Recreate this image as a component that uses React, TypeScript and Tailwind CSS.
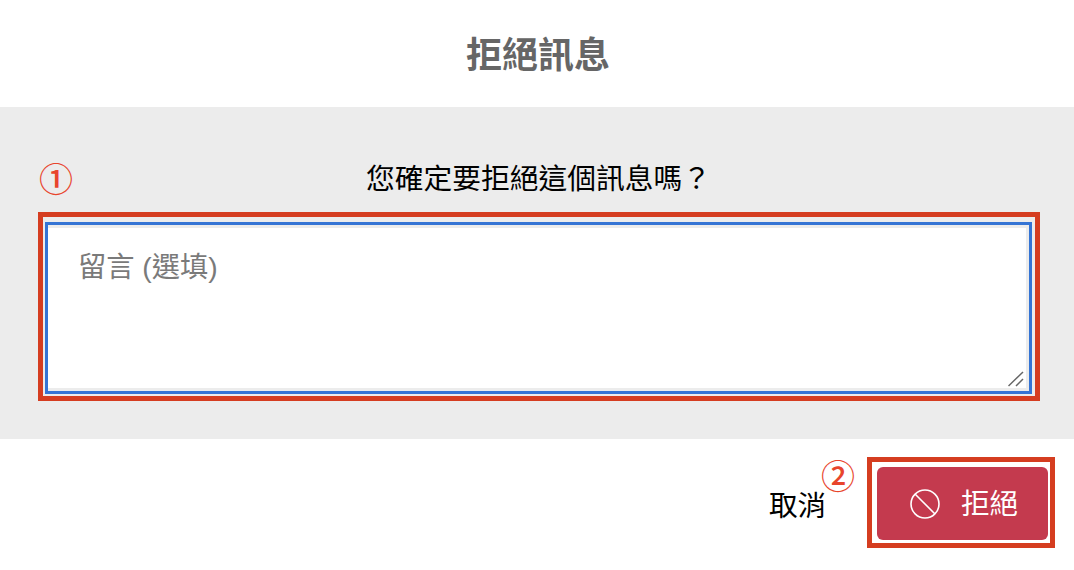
import { useState } from "react";

const cjk = "font-['Liberation_Sans','Noto_Sans_CJK_TC',sans-serif]";

const App = () => {
  const [note, setNote] = useState("");

  return (
    <div className={`${cjk} relative flex h-[570px] w-[1074px] flex-col overflow-hidden bg-white`}>
      {/* Title */}
      <header className="flex h-[107px] items-center justify-center pt-[4px] pl-[2px]">
        <h1 className="text-[36px] leading-none font-bold text-[#666666]">拒絕訊息</h1>
      </header>

      {/* Body */}
      <section className="relative h-[332px] bg-[#ececec] pt-[55px] pr-[34px] pl-[38px]">
        <span className="absolute top-[51px] left-[39px] text-[34px] leading-[44px] font-medium text-[#e8452c]">①</span>
        <p className="pr-[1px] text-center text-[28.75px] leading-[34px] text-black">您確定要拒絕這個訊息嗎？</p>
        <div className="mt-4 h-[189px] border-[5px] border-[#d53d20] pt-[5px] pr-[3px] pb-[2px] pl-[2px]">
          <div className="relative h-full border-[3px] border-[#3574d4]">
            <textarea
              value={note}
              onChange={(e) => setNote(e.target.value)}
              placeholder="留言 (選填)"
              className="block h-full w-full resize-none border-t-[3px] border-r-[3px] border-b-[3px] border-[#ececec] bg-white px-[30px] py-[21px] text-[28.25px] leading-[36px] text-black outline-none placeholder:text-[#7a7a7a]"
            />
            <svg className="absolute right-[5px] bottom-[4px] h-4 w-4" viewBox="0 0 16 16" fill="none" stroke="#666666" strokeWidth="1.5">
              <path d="M0.5 15 15 1M8 15l7-7" />
            </svg>
          </div>
        </div>
      </section>

      {/* Actions */}
      <footer className="flex flex-1 items-start justify-end pt-[18px] pr-[19px]">
        <button className="relative mt-[29px] mr-[41px] text-[28.5px] leading-[40px] text-black">
          取消
          <span className="absolute top-[-31px] right-[-29px] text-[34px] leading-[44px] font-medium text-[#e8452c]">②</span>
        </button>
        <div className="border-[5px] border-[#d53d20] pt-[5px] pr-[2px] pb-[3px] pl-[5px]">
          <button className="flex h-[73px] w-[171px] items-center justify-center gap-[21px] rounded-[6px] bg-[#c43a4e] pt-[2px] pl-[3px] text-[28.5px] text-white">
            <svg className="-mt-[2px] h-[30px] w-[30px]" viewBox="0 0 30 30" fill="none" stroke="white" strokeWidth="1.6">
              <circle cx="15" cy="15" r="14" />
              <path d="M5 5l20 20" />
            </svg>
            拒絕
          </button>
        </div>
      </footer>
    </div>
  );
};

export default App;
